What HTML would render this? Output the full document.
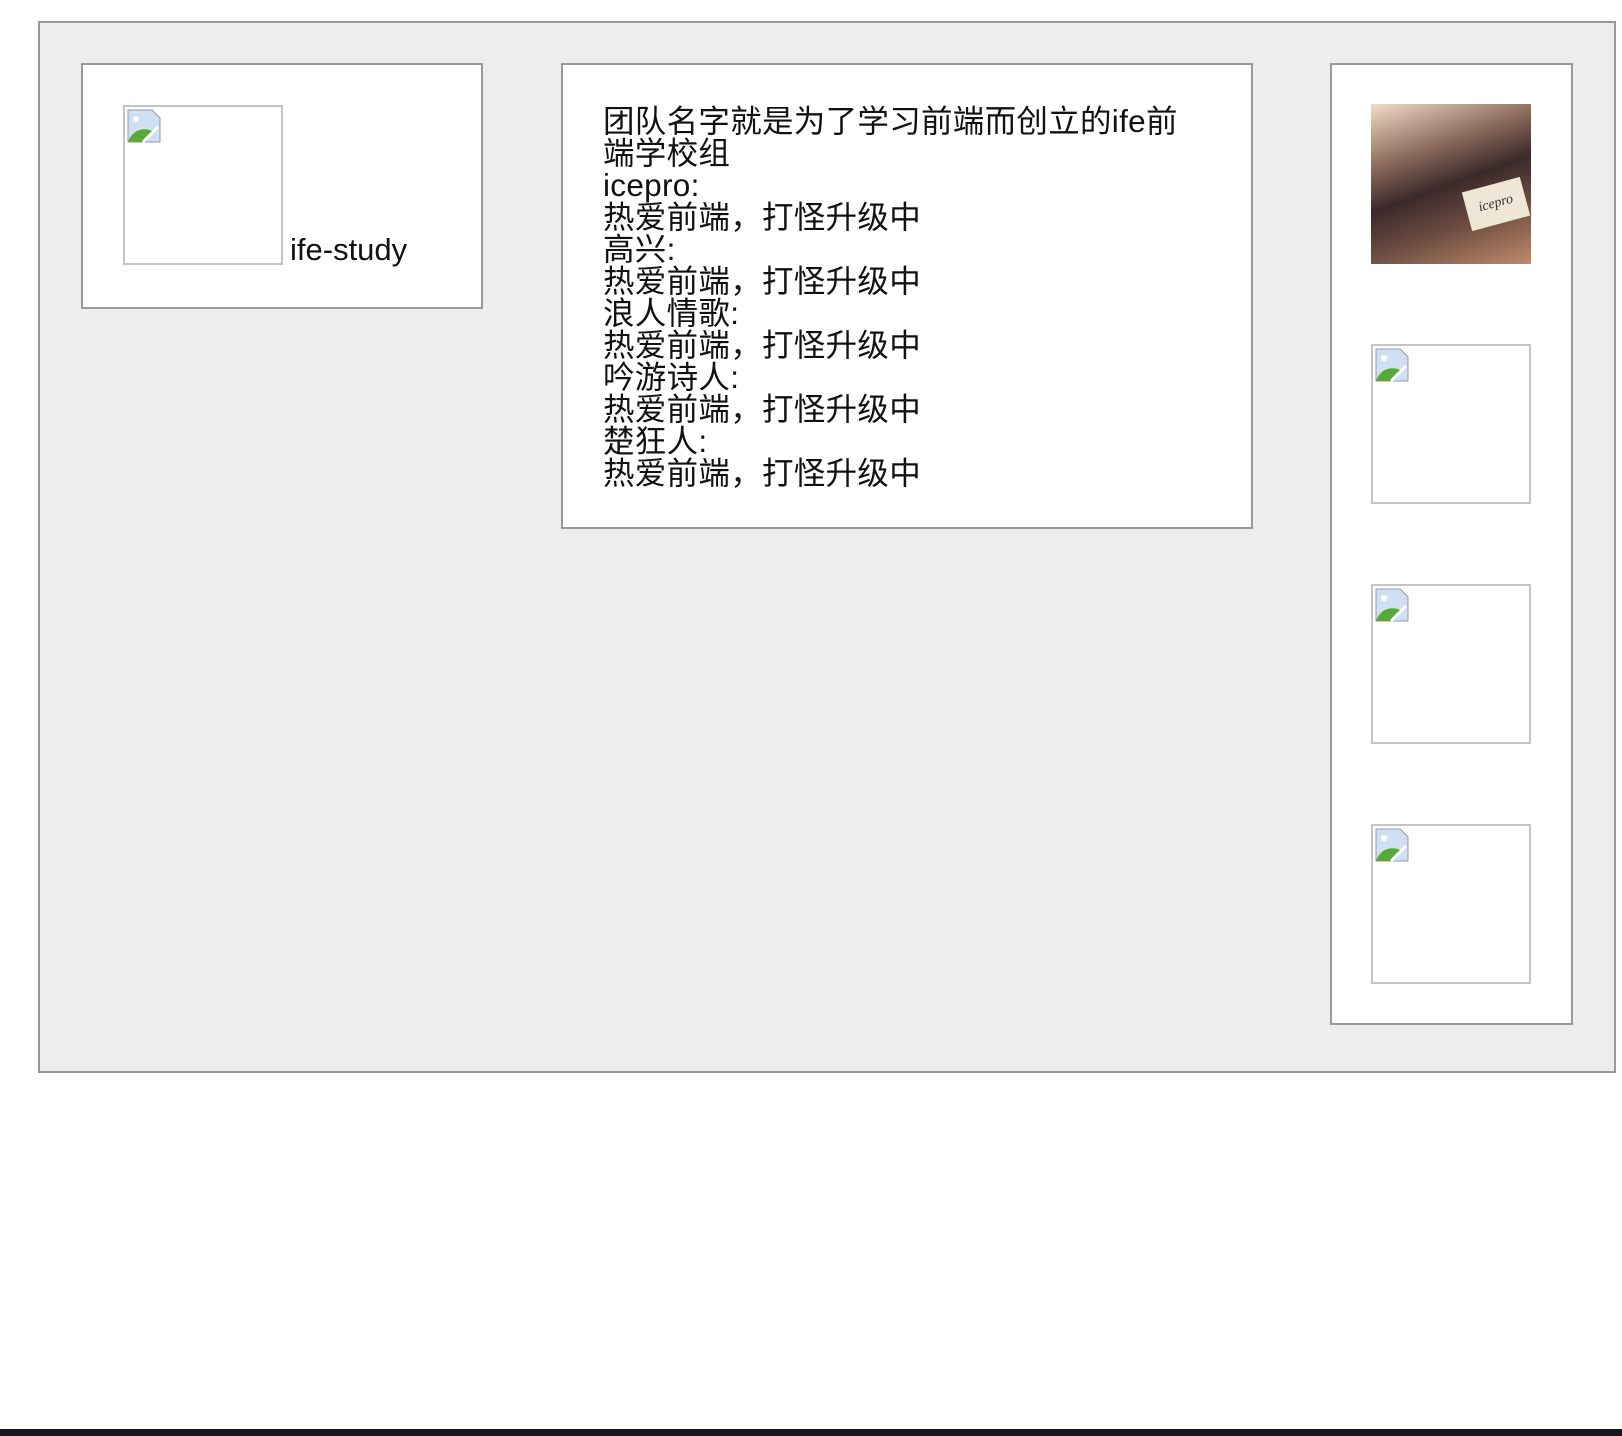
<!DOCTYPE html>
<html><head><meta charset="utf-8"><style>
html,body{margin:0;padding:0;background:#fff;width:1622px;height:1436px;overflow:hidden;position:relative}
body{font-family:"Liberation Sans","Noto Sans CJK SC",sans-serif;color:#111}
.outer{position:absolute;left:38px;top:21px;width:1574px;height:1048px;background:#ededed;border:2px solid #999}
.card{position:absolute;background:#fff;border:2px solid #999;box-sizing:border-box}
.ph{position:absolute;width:160px;height:160px;border:2px solid #c4c4c4;box-sizing:border-box;background:#fff}
.ph svg{position:absolute;left:2px;top:2px}
.txt{position:absolute;left:40px;top:40px;font-size:31.5px;line-height:32px;white-space:nowrap;letter-spacing:0.3px}
.bar{position:absolute;left:0;top:1429px;width:1622px;height:7px;background:#15151d}
</style></head><body>
<div class="outer"></div>
<div class="card" style="left:81px;top:63px;width:402px;height:246px">
  <div class="ph" style="left:40px;top:40px"><svg width="34" height="34" viewBox="0 0 34 34"><path d="M1 1h24l8 8v24H1z" fill="#cfe0f5" stroke="#999"/><path d="M1 33c4-12 16-16 26-10L18 33z" fill="#5aa83a"/><path d="M16 33l15-15" stroke="#fff" stroke-width="3"/><circle cx="9" cy="10" r="3" fill="#fff"/></svg></div>
  <div style="position:absolute;left:207px;top:167px;font-size:31px;line-height:36px">ife-study</div>
</div>
<div class="card" style="left:561px;top:63px;width:692px;height:466px">
  <div class="txt">团队名字就是为了学习前端而创立的ife前<br>端学校组<br>icepro:<br>热爱前端，打怪升级中<br>高兴:<br>热爱前端，打怪升级中<br>浪人情歌:<br>热爱前端，打怪升级中<br>吟游诗人:<br>热爱前端，打怪升级中<br>楚狂人:<br>热爱前端，打怪升级中</div>
</div>
<div class="card" style="left:1330px;top:63px;width:243px;height:962px">
  <div style="position:absolute;left:39px;top:39px;width:160px;height:160px;background:linear-gradient(160deg,#f3dcc8 0%,#8a6a5a 30%,#3a2a2a 50%,#6a4b40 70%,#c08a6a 100%)">
    <div style="position:absolute;left:95px;top:80px;width:60px;height:40px;background:#efe6d6;transform:rotate(-15deg);font-family:'Liberation Serif',serif;font-style:italic;font-size:14px;color:#333;text-align:center;line-height:40px">icepro</div>
  </div>
  <div class="ph" style="left:39px;top:279px"><svg width="34" height="34" viewBox="0 0 34 34"><path d="M1 1h24l8 8v24H1z" fill="#cfe0f5" stroke="#999"/><path d="M1 33c4-12 16-16 26-10L18 33z" fill="#5aa83a"/><path d="M16 33l15-15" stroke="#fff" stroke-width="3"/><circle cx="9" cy="10" r="3" fill="#fff"/></svg></div>
  <div class="ph" style="left:39px;top:519px"><svg width="34" height="34" viewBox="0 0 34 34"><path d="M1 1h24l8 8v24H1z" fill="#cfe0f5" stroke="#999"/><path d="M1 33c4-12 16-16 26-10L18 33z" fill="#5aa83a"/><path d="M16 33l15-15" stroke="#fff" stroke-width="3"/><circle cx="9" cy="10" r="3" fill="#fff"/></svg></div>
  <div class="ph" style="left:39px;top:759px"><svg width="34" height="34" viewBox="0 0 34 34"><path d="M1 1h24l8 8v24H1z" fill="#cfe0f5" stroke="#999"/><path d="M1 33c4-12 16-16 26-10L18 33z" fill="#5aa83a"/><path d="M16 33l15-15" stroke="#fff" stroke-width="3"/><circle cx="9" cy="10" r="3" fill="#fff"/></svg></div>
</div>
<div class="bar"></div>
</body></html>
